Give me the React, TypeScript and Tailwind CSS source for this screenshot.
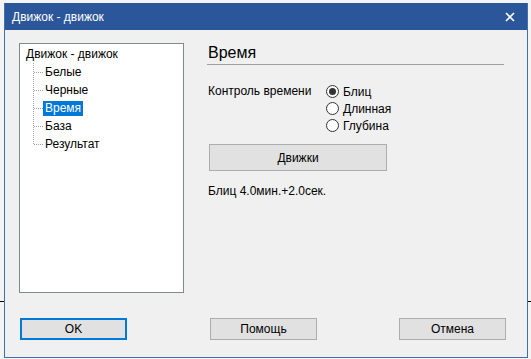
import React, { useState } from 'react';

const font = { fontFamily: '"Liberation Sans", Arial, sans-serif' };

const treeChildren = ['Белые', 'Черные', 'Время', 'База', 'Результат'];

const Connector: React.FC<{ last: boolean }> = ({ last }) => (
    <svg width="13" height="18" className="shrink-0">
        <line x1="3.5" y1="0" x2="3.5" y2={last ? 9 : 18} stroke="#a0a0a0" strokeDasharray="1 1" />
        <line x1="4" y1="9.5" x2="13" y2="9.5" stroke="#a0a0a0" strokeDasharray="1 1" />
    </svg>
);

const Radio: React.FC<{ checked: boolean; label: string; onClick: () => void }> = ({ checked, label, onClick }) => (
    <div className="flex items-center h-[17px] cursor-default" onClick={onClick}>
        <span className="w-[13px] h-[13px] rounded-full border border-[#333] bg-white flex items-center justify-center shrink-0">
            {checked && <span className="w-[7px] h-[7px] rounded-full bg-[#333]" />}
        </span>
        <span className="ml-[4px]">{label}</span>
    </div>
);

const WinButton: React.FC<{ label: string; focused?: boolean; className?: string }> = ({ label, focused, className }) => (
    <button
        className={`h-[22px] w-[107px] bg-[#e1e1e1] text-[12px] text-black flex items-center justify-center ${
            focused ? 'border-2 border-[#0078d7]' : 'border border-[#adadad]'
        } ${className || ''}`}
    >
        {label}
    </button>
);

const App: React.FC = () => {
    const [mode, setMode] = useState('Блиц');

    return (
        <div className="relative w-[531px] h-[359px] overflow-hidden bg-[#f4f4f4]" style={font}>
            {/* line of whatever sits behind the dialog */}
            <div className="absolute left-0 top-[301px] w-full h-px bg-black" />

            <div className="relative ml-[4px] mt-[3px] w-[524px] h-[355px] flex flex-col bg-[#f0f0f0] border-x border-b border-[#3f6fb3]">
                {/* title bar */}
                <div className="h-[27px] bg-[#2b579a] flex items-center justify-between pl-[7px] pr-[12px] text-white text-[12px] shrink-0">
                    <span>Движок - движок</span>
                    <svg width="10" height="10" viewBox="0 0 10 10">
                        <path d="M1 1L9 9M9 1L1 9" stroke="white" strokeWidth="1.6" />
                    </svg>
                </div>

                <div className="flex flex-col pl-[14px] pt-[13px] text-[12px] text-black">
                    <div className="flex">
                        {/* tree */}
                        <div className="w-[165px] h-[250px] border border-[#828790] bg-white pt-px leading-[18px]">
                            <div className="pl-[6px] h-[18px]">Движок - движок</div>
                            {treeChildren.map((name, i) => (
                                <div key={name} className="flex items-center h-[18px] pl-[10px]">
                                    <Connector last={i === treeChildren.length - 1} />
                                    <span
                                        className={`px-[2px] leading-[15px] ${
                                            name === 'Время' ? 'bg-[#0078d7] text-white' : ''
                                        }`}
                                    >
                                        {name}
                                    </span>
                                </div>
                            ))}
                        </div>

                        {/* page */}
                        <div className="ml-[24px] w-[296px] flex flex-col">
                            <div className="-ml-px pl-px text-[16px] leading-[20px] pb-px border-b border-[#a0a0a0]">
                                Время
                            </div>

                            <div className="mt-[18px] flex">
                                <div className="w-[118px] leading-[17px]">Контроль времени</div>
                                <div className="flex flex-col">
                                    {['Блиц', 'Длинная', 'Глубина'].map((m) => (
                                        <Radio key={m} label={m} checked={mode === m} onClick={() => setMode(m)} />
                                    ))}
                                </div>
                            </div>

                            <button className="mt-[10px] ml-px h-[27px] w-[178px] bg-[#e1e1e1] border border-[#adadad] text-[12px]">
                                Движки
                            </button>

                            <div className="mt-[12px] leading-[17px]">Блиц 4.0мин.+2.0сек.</div>
                        </div>
                    </div>

                    {/* bottom buttons */}
                    <div className="flex mt-[25px]">
                        <WinButton label="OK" focused className="ml-px w-[106px]" />
                        <WinButton label="Помощь" className="ml-[83px]" />
                        <WinButton label="Отмена" className="ml-[82px]" />
                    </div>
                </div>
            </div>
        </div>
    );
};

export default App;
